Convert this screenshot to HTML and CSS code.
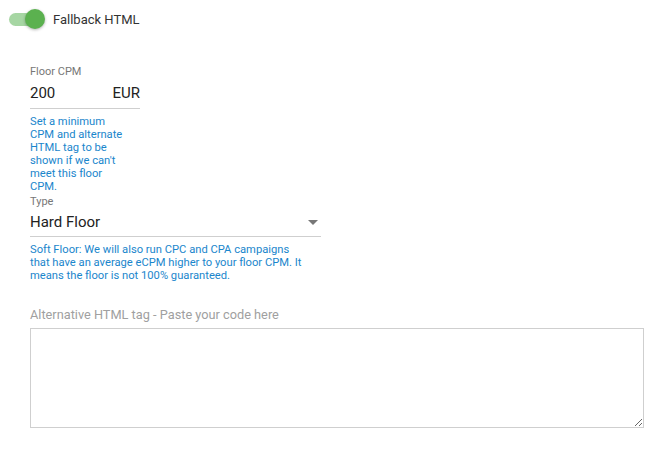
FILE: index.html
```html
<!DOCTYPE html>
<html lang="en">
<head>
    <meta charset="UTF-8">
    <title>Fallback HTML</title>
    <link rel="stylesheet" href="styles.css">
</head>
<body>
    <div class="toggle-row">
        <span class="switch"><span class="knob"></span></span>
        <span class="toggle-label">Fallback HTML</span>
    </div>

    <div class="fields">
        <div class="field floor">
            <label class="field-label">Floor CPM</label>
            <div class="input-line">
                <span class="value">200</span>
                <span class="unit">EUR</span>
            </div>
            <p class="help narrow">Set a minimum CPM and alternate HTML tag to be shown if we can't meet this floor CPM.</p>
        </div>

        <div class="field type">
            <label class="field-label">Type</label>
            <div class="input-line">
                <span class="value">Hard Floor</span>
                <span class="arrow"></span>
            </div>
            <p class="help wide">Soft Floor: We will also run CPC and CPA campaigns that have an average eCPM higher to your floor CPM. It means the floor is not 100% guaranteed.</p>
        </div>

        <div class="field alt">
            <label class="alt-label" for="altHtml">Alternative HTML tag - Paste your code here</label>
            <textarea id="altHtml"></textarea>
        </div>
    </div>
</body>
</html>
```

FILE: styles.css
```css
:root {
    --green: #5bb14f;
    --green-light: #a6d6a3;
    --blue: #1a86cc;
    --text: #222;
    --muted: #777;
    --line: #cfcfcf;
}

body {
    font-family: Roboto, 'Liberation Sans', sans-serif;
    color: var(--text);
    background: white;
    margin: 0;
    padding: 0;
}

.toggle-row {
    display: flex;
    align-items: center;
    padding: 9px 0 0 9px;
    height: 21px;
}

.switch {
    position: relative;
    display: block;
    width: 34px;
    height: 13px;
    border-radius: 7px;
    background: var(--green-light);
}

.knob {
    position: absolute;
    top: -4px;
    right: -2px;
    width: 20px;
    height: 20px;
    border-radius: 50%;
    background: var(--green);
    box-shadow: 0 1px 3px rgba(0, 0, 0, 0.3);
}

.toggle-label {
    margin-left: 10px;
    font-size: 13px;
    color: #333;
}

.fields {
    padding-left: 30px;
    padding-right: 18px;
}

.field-label {
    display: block;
    font-size: 11px;
    color: var(--muted);
    line-height: 13px;
}

.input-line {
    display: flex;
    justify-content: space-between;
    align-items: center;
    border-bottom: 1px solid var(--line);
    font-size: 15px;
    line-height: 18px;
}

.floor {
    margin-top: 35px;
    width: 110px;
}

.floor .input-line {
    padding: 6px 0 6px;
}

.type {
    margin-top: 2px;
    width: 291px;
}

.type .input-line {
    padding: 5px 0 5px;
}

.arrow {
    width: 0;
    height: 0;
    margin-right: 3px;
    border-left: 5px solid transparent;
    border-right: 5px solid transparent;
    border-top: 5px solid #777;
}

.help {
    margin: 6px 0 0;
    font-size: 11.2px;
    line-height: 13px;
    color: var(--blue);
}

.help.narrow {
    width: 100px;
}

.help.wide {
    width: 272px;
}

.alt {
    margin-top: 26px;
}

.alt-label {
    display: block;
    font-size: 12.75px;
    color: #a0a0a0;
    line-height: 14px;
}

textarea {
    display: block;
    box-sizing: border-box;
    width: 614px;
    height: 100px;
    margin-top: 6px;
    border: 1px solid var(--line);
    border-radius: 0;
    font-family: Roboto, sans-serif;
}
```
